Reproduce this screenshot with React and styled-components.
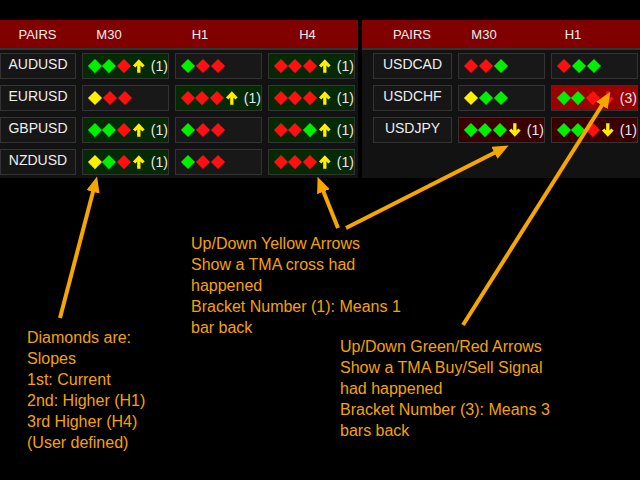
import React from "react";
import styled, { createGlobalStyle } from "styled-components";

const G = createGlobalStyle`
  body{margin:0;background:#000;font-family:"Liberation Sans",Arial,sans-serif;}
`;
const Page = styled.div`position:relative;width:640px;height:480px;background:#000;overflow:hidden;`;
const Top = styled.div`display:flex;gap:4px;padding-top:20px;`;
const Panel = styled.div`width:${p => p.w}px;background:#121212;height:158px;`;
const Head = styled.div`height:28px;background:#800000;display:grid;grid-template-columns:${p => p.cols};align-items:center;color:#eee;font-size:13px;border-bottom:2px solid #333;`;
const HCell = styled.div`text-align:center;`;
const Rows = styled.div`display:flex;flex-direction:column;gap:6px;padding:3px 0 0 ${p => p.pl}px;`;
const Row = styled.div`display:grid;grid-template-columns:${p => p.cols};column-gap:6px;height:26px;`;
const Pair = styled.div`border:1px solid #333;background:#161616;color:#eee;font-size:14px;display:flex;align-items:center;justify-content:center;padding-bottom:4px;box-sizing:border-box;`;
const Cell = styled.div`border:1px solid #333;box-sizing:border-box;background:${p => ({g:"#052805",d:"#3a0000",r:"#9a0000"}[p.k] || "#181818")};display:flex;align-items:center;padding-left:4px;color:#e8e8f0;font-size:14px;`;
const Dia = styled.span`width:10px;height:10px;background:${p => p.c};transform:rotate(45deg);margin:0 2.5px 0 2.5px;display:inline-block;`;
const Num = styled.span`margin-left:5px;`;
const Notes = styled.svg`position:absolute;left:0;top:0;`;
const Txt = styled.div`position:absolute;left:${p => p.x}px;top:${p => p.y}px;color:#f5a300;font-size:16px;line-height:21px;white-space:pre;`;

const C = { g: "#00ee00", r: "#ff1010", y: "#ffee00" };
const Arrow = ({ up, c }) => (
  <svg width="14" height="16" viewBox="0 0 14 16" style={{ marginLeft: 1 }}>
    <g transform={up ? "" : "rotate(180 7 8)"} fill={c}>
      <path d="M7 1 L13 7.5 L10.5 9.5 L8.7 7.4 L8.7 15 L5.3 15 L5.3 7.4 L3.5 9.5 L1 7.5Z" />
    </g>
  </svg>
);
const Sig = ({ s }) => {
  const [d, k, a, n] = s;
  return (
    <Cell k={k}>
      {d.split("").map((ch, i) => <Dia key={i} c={C[ch]} />)}
      {a && <Arrow up={a[0] === "u"} c={a[1] === "y" ? C.y : C.r} />}
      {n && <Num>({n})</Num>}
    </Cell>
  );
};

const left = [
  ["AUDUSD", ["ggr", "g", "uy", 1], ["grr"], ["rrr", "g", "uy", 1]],
  ["EURUSD", ["yrr"], ["rrr", "g", "uy", 1], ["rrr", "g", "uy", 1]],
  ["GBPUSD", ["ggr", "g", "uy", 1], ["grr"], ["rrg", "g", "uy", 1]],
  ["NZDUSD", ["ygr", "g", "uy", 1], ["grr"], ["rrr", "g", "uy", 1]],
];
const right = [
  ["USDCAD", ["rrg"], ["rgg"]],
  ["USDCHF", ["ygg"], ["ggr", "r", "dr", 3]],
  ["USDJPY", ["ggg", "d", "dy", 1], ["ggr", "d", "dy", 1]],
];

const arrows = [
  [60, 318, 94, 188],
  [338, 228, 322, 188],
  [346, 228, 498, 151],
  [463, 325, 604, 102],
];

export default function App() {
  return (
    <Page>
      <G />
      <Top>
        <Panel w={358}>
          <Head cols="75px 68px 114px 101px"><HCell>PAIRS</HCell><HCell>M30</HCell><HCell>H1</HCell><HCell>H4</HCell></Head>
          <Rows pl={0}>
            {left.map(r => (
              <Row key={r[0]} cols="76px 87px 87px 87px">
                <Pair>{r[0]}</Pair><Sig s={r[1]} /><Sig s={r[2]} /><Sig s={r[3]} />
              </Row>
            ))}
          </Rows>
        </Panel>
        <Panel w={278}>
          <Head cols="100px 44px 134px"><HCell>PAIRS</HCell><HCell>M30</HCell><HCell>H1</HCell></Head>
          <Rows pl={11}>
            {right.map(r => (
              <Row key={r[0]} cols="79px 87px 87px">
                <Pair>{r[0]}</Pair><Sig s={r[1]} /><Sig s={r[2]} />
              </Row>
            ))}
          </Rows>
        </Panel>
      </Top>
      <Notes width="640" height="480">
        <defs>
          <marker id="h" markerWidth="4" markerHeight="3.4" refX="1" refY="1.7" orient="auto">
            <path d="M0 0 L4 1.7 L0 3.4Z" fill="#f7a600" />
          </marker>
        </defs>
        {arrows.map((a, i) => (
          <line key={i} x1={a[0]} y1={a[1]} x2={a[2]} y2={a[3]} stroke="#f7a600" strokeWidth="4" markerEnd="url(#h)" />
        ))}
      </Notes>
      <Txt x={191} y={233}>{"Up/Down Yellow Arrows\nShow a TMA cross had\nhappened\nBracket Number (1): Means 1\nbar back"}</Txt>
      <Txt x={27} y={327}>{"Diamonds are:\nSlopes\n1st: Current\n2nd: Higher (H1)\n3rd Higher (H4)\n(User defined)"}</Txt>
      <Txt x={340} y={336}>{"Up/Down Green/Red Arrows\nShow a TMA Buy/Sell Signal\nhad happened\nBracket Number (3): Means 3\nbars back"}</Txt>
    </Page>
  );
}
